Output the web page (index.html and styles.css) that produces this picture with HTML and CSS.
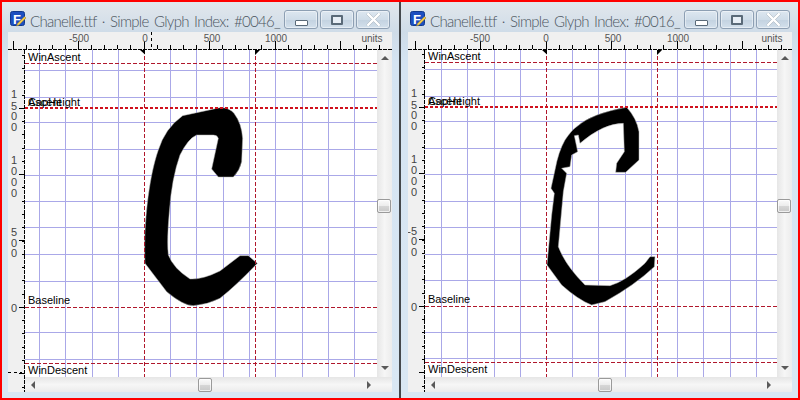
FILE: index.html
```html
<!DOCTYPE html>
<html lang="en">
<head>
<meta charset="utf-8">
<title>Glyph windows</title>
<link rel="stylesheet" href="styles.css">
</head>
<body>
<main class="stage">
  <section class="window window-left">
    <header class="titlebar">
      <svg class="app-icon" viewBox="0 0 17 17"><rect x=".5" y=".5" width="14" height="14" rx="2" class="icon-box"/><text x="3" y="12.5" class="icon-f">F</text><path d="M16 7l-7 7-2.500 1 1-2.500 7-7z" class="icon-pen"/></svg>
      <h1 class="title">Chanelle.ttf · Simple Glyph Index: #0046_</h1>
      <div class="controls">
        <button class="ctl"><span class="ico-min"></span></button>
        <button class="ctl"><span class="ico-max"></span></button>
        <button class="ctl"><svg class="ico-x" viewBox="0 0 14 12"><path d="M2 1l10 10M12 1L2 11"/></svg></button>
      </div>
    </header>
    <div class="client">
      <svg class="ruler-top" viewBox="8 32 384 18">
        <line x1="8" y1="49.500" x2="392" y2="49.500" class="r-base"/>
        <line x1="12.500" y1="47" x2="392" y2="47" class="r-minor"/>
        <line x1="12.500" y1="45" x2="392" y2="45" class="r-major"/>
        <line x1="151.500" y1="32" x2="151.500" y2="47" class="r-cross"/>
        <text x="79" y="42" class="r-label">-500</text>
        <text x="145" y="42" class="r-label">0</text>
        <text x="212" y="42" class="r-label">500</text>
        <text x="276" y="42" class="r-label">1000</text>
        <text x="372" y="42" class="r-label">units</text>
      </svg>
      <svg class="ruler-left" viewBox="8 50 17 342">
        <line x1="24.500" y1="50" x2="24.500" y2="392" class="r-base"/>
        <line x1="23" y1="41.500" x2="23" y2="392" class="rv-minor"/>
        <line x1="21.500" y1="41.500" x2="21.500" y2="392" class="rv-major"/>
        <line x1="8" y1="372.500" x2="22" y2="372.500" class="r-cross"/>
        <text x="14 14 14 14" y="98 110 120 131" class="r-digit">1500</text>
        <text x="14 14 14 14" y="164 175 186 197" class="r-digit">1000</text>
        <text x="14 14 14" y="236 247 257" class="r-digit">500</text>
        <text x="14" y="312" class="r-digit">0</text>
      </svg>
      <svg class="canvas" viewBox="25 50 352 327">
        <path class="grid" d="M39.500 50V377M65.500 50V377M92.500 50V377M118.500 50V377M170.500 50V377M196.500 50V377M223.500 50V377M249.500 50V377M275.500 50V377M302.500 50V377M328.500 50V377M354.500 50V377M25 70.500H377M25 97.500H377M25 122.500H377M25 149.500H377M25 175.500H377M25 201.500H377M25 227.500H377M25 254.500H377M25 281.500H377M25 332.500H377M25 359.500H377"/>
        <path class="glyph" transform="translate(130 95) scale(.3333)" d="M45 505C40 400 55 250 85 165Q105 100 158 62L270 38Q300 38 312 55Q335 85 338 130L335 200Q330 225 310 246L265 246 245 222 265 130Q262 120 250 120L200 120Q175 130 150 180Q125 250 118 350Q110 440 115 480Q130 520 180 552Q215 555 270 528L330 482 355 482 382 505Q320 570 270 610Q230 630 190 632Q160 632 110 590Z"/>
        <path class="guide" d="M144.500 50V377M255.500 50V377M25 63.500H377M25 307.500H377M25 363.500H377"/>
        <path class="guide-bold" d="M25 108H377"/>
        <path class="mark" d="M140 50H145V54.500ZM255 50H260L255 55Z"/>
        <text x="28" y="61" class="lbl">WinAscent</text>
        <text x="28" y="106" class="lbl">CapHeight</text>
        <text x="28" y="106" class="lbl">Ascent</text>
        <text x="28" y="304" class="lbl">Baseline</text>
        <text x="28" y="374" class="lbl">WinDescent</text>
      </svg>
      <div class="vscroll">
        <span class="arrow arrow-up"></span>
        <span class="thumb vthumb"></span>
        <span class="arrow arrow-down"></span>
      </div>
      <div class="hscroll">
        <span class="arrow arrow-left"></span>
        <span class="thumb hthumb"></span>
        <span class="arrow arrow-right"></span>
      </div>
    </div>
  </section>
  <div class="divider"></div>
  <section class="window window-right">
    <header class="titlebar">
      <svg class="app-icon" viewBox="0 0 17 17"><rect x=".5" y=".5" width="14" height="14" rx="2" class="icon-box"/><text x="3" y="12.5" class="icon-f">F</text><path d="M16 7l-7 7-2.500 1 1-2.500 7-7z" class="icon-pen"/></svg>
      <h1 class="title">Chanelle.ttf · Simple Glyph Index: #0016_</h1>
      <div class="controls">
        <button class="ctl"><span class="ico-min"></span></button>
        <button class="ctl"><span class="ico-max"></span></button>
        <button class="ctl"><svg class="ico-x" viewBox="0 0 14 12"><path d="M2 1l10 10M12 1L2 11"/></svg></button>
      </div>
    </header>
    <div class="client">
      <svg class="ruler-top" viewBox="408 32 384 18">
        <line x1="408" y1="49.500" x2="792" y2="49.500" class="r-base"/>
        <line x1="414.500" y1="47" x2="792" y2="47" class="r-minor"/>
        <line x1="414.500" y1="45" x2="792" y2="45" class="r-major"/>
        <text x="480" y="42" class="r-label">-500</text>
        <text x="546" y="42" class="r-label">0</text>
        <text x="613" y="42" class="r-label">500</text>
        <text x="678" y="42" class="r-label">1000</text>
        <text x="772" y="42" class="r-label">units</text>
      </svg>
      <svg class="ruler-left" viewBox="408 50 17 342">
        <line x1="424.500" y1="50" x2="424.500" y2="392" class="r-base"/>
        <line x1="423" y1="40.500" x2="423" y2="392" class="rv-minor"/>
        <line x1="421.500" y1="40.500" x2="421.500" y2="392" class="rv-major"/>
        <text x="414 414 414 414" y="97 109 119 130" class="r-digit">1500</text>
        <text x="414 414 414 414" y="163 174 185 196" class="r-digit">1000</text>
        <text x="409 414 414 414" y="235 235 245 256" class="r-digit">-500</text>
        <text x="414" y="311" class="r-digit">0</text>
      </svg>
      <svg class="canvas" viewBox="425 50 352 327">
        <path class="grid" d="M441.500 50V377M467.500 50V377M494.500 50V377M520.500 50V377M572.500 50V377M598.500 50V377M625.500 50V377M651.500 50V377M677.500 50V377M703.500 50V377M730.500 50V377M756.500 50V377M425 69.500H777M425 96.500H777M425 121.500H777M425 148.500H777M425 174.500H777M425 201.500H777M425 227.500H777M425 254.500H777M425 280.500H777M425 332.500H777M425 358.500H777"/>
        <path class="glyph" transform="translate(535 95) scale(.3333)" d="M36 510L50 360 58 295 48 280 60 225Q70 170 90 135Q110 105 125 95Q170 55 275 37Q305 70 312 110L312 195 272 232 242 232 245 205 268 170 265 85Q205 85 135 145L130 120 118 122 125 155 128 170 110 180 105 215 80 220 95 235 85 290 70 455Q90 510 150 570L225 572Q270 560 330 505L345 485 360 485 358 515Q300 570 210 620L170 630Q130 615 80 570Z"/>
        <path class="guide" d="M546.500 50V377M657.500 50V377M425 62.500H777M425 306.500H777M425 362.500H777"/>
        <path class="guide-bold" d="M425 107H777"/>
        <path class="mark" d="M542 50H547V54.500ZM657 50H662L657 55Z"/>
        <text x="428" y="60" class="lbl">WinAscent</text>
        <text x="428" y="105" class="lbl">CapHeight</text>
        <text x="428" y="105" class="lbl">Ascent</text>
        <text x="428" y="303" class="lbl">Baseline</text>
        <text x="428" y="373" class="lbl">WinDescent</text>
      </svg>
      <div class="vscroll">
        <span class="arrow arrow-up"></span>
        <span class="thumb vthumb"></span>
        <span class="arrow arrow-down"></span>
      </div>
      <div class="hscroll">
        <span class="arrow arrow-left"></span>
        <span class="thumb hthumb"></span>
        <span class="arrow arrow-right"></span>
      </div>
    </div>
  </section>
</main>
</body>
</html>
```
FILE: styles.css
```css
* { box-sizing: border-box; }
html, body { margin: 0; padding: 0; }
body { width: 800px; height: 400px; overflow: hidden; background: #f00; font-family: "Liberation Sans", Arial, sans-serif; }

.stage { display: flex; width: 800px; height: 400px; padding: 2px; }
.divider { width: 2px; background: #44484c; }
.window { width: 397px; height: 396px; display: flex; flex-direction: column; background: linear-gradient(180deg, #e2e7ec 0, #cfdce8 30px, #d5e4f2 60px, #d9e7f3 100%); }
.window-left { padding: 0 7px 6px 6px; }
.window-right { padding: 0 6px 6px 7px; }

.titlebar { height: 30px; display: flex; align-items: flex-start; padding: 8px 2px 0 2px; }
.app-icon { width: 17px; height: 17px; flex: none; margin-top: 1px; }
.icon-box { fill: #1d4fc0; stroke: #123a8c; }
.icon-f { font: bold 13px "Liberation Sans", sans-serif; fill: #fff; }
.icon-pen { fill: #f1c94a; stroke: #8a7a3a; stroke-width: .5; }
.title { margin: 2px 0 0 3px; flex: 1; min-width: 0; white-space: nowrap; font: 300 15px Lato, "Liberation Sans", sans-serif; letter-spacing: -.7px; word-spacing: 2px; color: #4c565f; }

.controls { display: flex; gap: 2px; flex: none; }
.ctl { width: 34px; height: 19px; padding: 0; display: flex; align-items: center; justify-content: center; border: 1px solid #8d9fb3; border-radius: 3px; background: linear-gradient(180deg, #dde7f0 0, #cfdce8 50%, #c4d3e1 55%, #d3e0ec 100%); box-shadow: inset 0 0 0 1px rgba(255,255,255,.45); }
.ico-min { width: 13px; height: 6px; margin-top: 6px; background: #fff; border: 1px solid #5a6a78; border-radius: 1px; }
.ico-max { width: 12px; height: 10px; background: #e8eff6; border: 2px solid #5a6a78; border-radius: 1px; box-shadow: inset 0 0 0 2px #e8eff6; }
.ico-x { width: 15px; height: 13px; fill: none; stroke: #fff; stroke-width: 2.500; stroke-linecap: round; filter: drop-shadow(0 0 .7px #4a5a68); }

.client { width: 384px; height: 360px; display: grid; grid-template-columns: 17px 352px 15px; grid-template-rows: 18px 327px 15px; background: #f0f0f0; }
.ruler-top { grid-column: 1 / 4; grid-row: 1; width: 384px; height: 18px; display: block; }
.ruler-left { grid-column: 1; grid-row: 2 / 4; width: 17px; height: 342px; display: block; }
.canvas { grid-column: 2; grid-row: 2; width: 352px; height: 327px; display: block; background: #fff; }
.vscroll { grid-column: 3; grid-row: 2; display: flex; flex-direction: column; align-items: center; background: linear-gradient(90deg, #e6e6e6, #f6f6f6 50%, #ececec); }
.hscroll { grid-column: 2 / 4; grid-row: 3; display: flex; align-items: center; background: linear-gradient(180deg, #e6e6e6, #f6f6f6 50%, #ececec); }

.thumb { display: block; flex: none; width: 14px; height: 14px; border: 1px solid #9a9a9a; border-radius: 2px; background: linear-gradient(180deg, #fafafa 0, #ececec 48%, #d6d6d6 52%, #c8c8c8 100%); box-shadow: inset 0 0 0 1px rgba(255,255,255,.7); }
.vthumb { margin-top: 139px; margin-right: 1px; }
.hthumb { margin-left: 163px; }

.arrow { display: block; width: 0; height: 0; flex: none; border-style: solid; border-color: transparent; }
.arrow-up { margin-top: 6px; border-width: 0 4px 4px; border-bottom-color: #5a5a5a; }
.arrow-down { margin-top: auto; margin-bottom: 7px; border-width: 4px 4px 0; border-top-color: #5a5a5a; }
.arrow-left { margin-left: 6px; border-width: 4px 4px 4px 0; border-right-color: #5a5a5a; }
.arrow-right { margin-left: auto; margin-right: 21px; border-width: 4px 0 4px 4px; border-left-color: #5a5a5a; }

.r-base { stroke: #000; stroke-width: 1; stroke-dasharray: 4 1; shape-rendering: crispEdges; }
.r-minor { stroke: #000; stroke-width: 4; stroke-dasharray: 1 12.100; shape-rendering: crispEdges; }
.r-major { stroke: #000; stroke-width: 8; stroke-dasharray: 1 64.500; shape-rendering: crispEdges; }
.rv-minor { stroke: #000; stroke-width: 3; stroke-dasharray: 1 12.270; shape-rendering: crispEdges; }
.rv-major { stroke: #000; stroke-width: 6; stroke-dasharray: 1 65.300; shape-rendering: crispEdges; }
.r-cross { stroke: #000; stroke-width: 1; stroke-dasharray: 3 3; shape-rendering: crispEdges; }
.r-label { font: 10px "Liberation Sans", sans-serif; fill: #555; text-anchor: middle; }
.r-digit { font: 11px "Liberation Sans", sans-serif; fill: #444; text-anchor: middle; }

.grid { fill: none; stroke: #aaa8e8; stroke-width: 1; shape-rendering: crispEdges; }
.guide { fill: none; stroke: #b0182c; stroke-width: 1; stroke-dasharray: 4 2; shape-rendering: crispEdges; }
.guide-bold { fill: none; stroke: #d0101c; stroke-width: 2; stroke-dasharray: 3 2; shape-rendering: crispEdges; }
.glyph { fill: #000; stroke: #b0b0b0; stroke-width: 1.500; stroke-linejoin: round; }
.mark { fill: #000; }
.lbl { font: 11px "Liberation Sans", sans-serif; fill: #000; }
```
